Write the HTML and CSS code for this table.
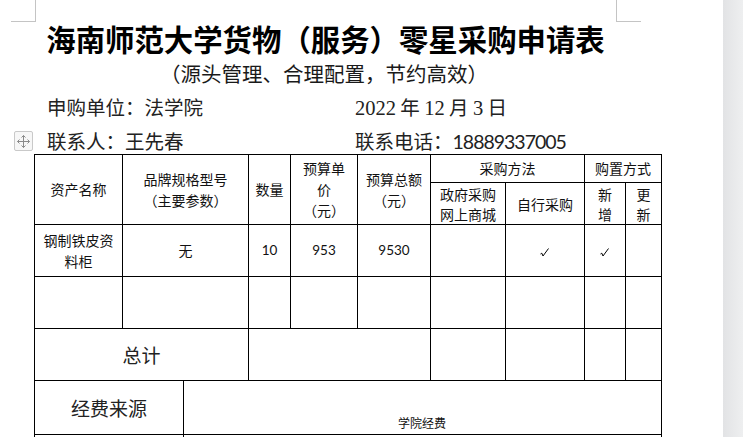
FILE: index.html
```html
<!DOCTYPE html>
<html lang="zh-CN">
<head>
<meta charset="utf-8">
<title>海南师范大学货物（服务）零星采购申请表</title>
<link rel="stylesheet" href="styles.css">
</head>
<body>
<div class="window">
  <div class="page">
    <span class="crop crop-tl"></span>
    <span class="crop crop-tr"></span>
    <span class="move-handle">
      <svg width="13" height="13" viewBox="0 0 13 13" fill="none" stroke="#8a8a8a" stroke-width="1">
        <path d="M6.5 0.5 V12.5 M0.5 6.5 H12.5"/>
        <path d="M4.5 2.5 L6.5 0.5 L8.5 2.5 M4.5 10.5 L6.5 12.5 L8.5 10.5 M2.5 4.5 L0.5 6.5 L2.5 8.5 M10.5 4.5 L12.5 6.5 L10.5 8.5"/>
      </svg>
    </span>
    <div class="doc">
      <h1 class="title">海南师范大学货物（服务）零星采购申请表</h1>
      <p class="subtitle">（源头管理、合理配置，节约高效）</p>
      <div class="info-row">
        <span>申购单位：法学院</span>
        <span><span class="num">2022</span> 年 <span class="num">12</span> 月 <span class="num">3</span> 日</span>
      </div>
      <div class="info-row info-row-2">
        <span>联系人：王先春</span>
        <span>联系电话：<span class="phone">18889337005</span></span>
      </div>
      <table class="form">
        <colgroup>
          <col class="c1"><col class="c2a"><col class="c2b"><col class="c3"><col class="c4"><col class="c5"><col class="c6"><col class="c7"><col class="c8"><col class="c9">
        </colgroup>
        <tr class="r-h1">
          <td rowspan="2">资产名称</td>
          <td rowspan="2" colspan="2">品牌规格型号<br>（主要参数）</td>
          <td rowspan="2">数量</td>
          <td rowspan="2">预算单<br>价<br>（元）</td>
          <td rowspan="2">预算总额<br>（元）</td>
          <td colspan="2">采购方法</td>
          <td colspan="2">购置方式</td>
        </tr>
        <tr class="r-h2">
          <td>政府采购<br>网上商城</td>
          <td>自行采购</td>
          <td>新<br>增</td>
          <td>更<br>新</td>
        </tr>
        <tr class="r-data">
          <td>钢制铁皮资<br>料柜</td>
          <td colspan="2">无</td>
          <td class="n">10</td>
          <td class="n">953</td>
          <td class="n">9530</td>
          <td></td>
          <td><svg class="tick" width="10" height="9" viewBox="0 0 10 9" fill="none" stroke="#000" stroke-width="1"><path d="M0.5 6 L1.8 5.2 L3 8 L8.5 0.5"/></svg></td>
          <td><svg class="tick" width="10" height="9" viewBox="0 0 10 9" fill="none" stroke="#000" stroke-width="1"><path d="M0.5 6 L1.8 5.2 L3 8 L8.5 0.5"/></svg></td>
          <td></td>
        </tr>
        <tr class="r-data">
          <td></td><td colspan="2"></td><td></td><td></td><td></td><td></td><td></td><td></td><td></td>
        </tr>
        <tr class="r-data">
          <td colspan="3" class="big">总计</td>
          <td colspan="3"></td><td></td><td></td><td></td><td></td>
        </tr>
        <tr class="r-fund">
          <td colspan="2" class="big">经费来源</td>
          <td colspan="8" class="fund-src">学院经费</td>
        </tr>
        <tr class="r-next">
          <td colspan="2"></td>
          <td colspan="8"></td>
        </tr>
      </table>
    </div>
  </div>
  <div class="scrollbar"></div>
</div>
</body>
</html>
```

FILE: styles.css
```css
html, body {
  margin: 0;
  padding: 0;
  background: #ffffff;
}

.window {
  display: flex;
  width: 743px;
  height: 437px;
  overflow: hidden;
}

.page {
  position: relative;
  width: 723px;
  height: 437px;
  overflow: hidden;
  background: #ffffff;
}

.scrollbar {
  width: 20px;
  height: 437px;
  background: linear-gradient(to right, #e2e3e5, #eeeff0);
}

.crop {
  position: absolute;
  top: 0;
  height: 21px;
  border-bottom: 1px solid #c4c4c4;
}

.crop-tl {
  left: 11px;
  width: 24px;
  border-right: 1px solid #c4c4c4;
}

.crop-tr {
  left: 616px;
  width: 24px;
  border-left: 1px solid #c4c4c4;
}

.move-handle {
  position: absolute;
  left: 14px;
  top: 131px;
  width: 17px;
  height: 18px;
  border: 1px solid #c9c9c9;
  border-radius: 2px;
  background: #f7f7f7;
  display: flex;
  align-items: center;
  justify-content: center;
}

.doc {
  margin-left: 35px;
  width: 581px;
  padding-top: 20px;
  font-family: "Noto Sans CJK SC", "Noto Sans", sans-serif;
  color: #111;
}

.title {
  margin: 0;
  font-size: 29.4px;
  line-height: 37px;
  font-weight: 700;
  text-align: center;
  color: #000;
  white-space: nowrap;
}

.subtitle {
  margin: 0;
  padding-left: 125px;
  font-size: 20.5px;
  line-height: 33px;
  font-weight: 400;
  color: #1a1a1a;
  white-space: nowrap;
}

.info-row {
  display: grid;
  grid-template-columns: 308px 1fr;
  padding-left: 12px;
  font-size: 19.5px;
  line-height: 34px;
  color: #222;
  white-space: nowrap;
}

.info-row-2 {
  line-height: 30px;
  padding-top: 1px;
  height: 28px;
  overflow: visible;
}

.num {
  font-family: "Liberation Serif", serif;
  font-size: 20.5px;
}

.phone {
  font-family: "Lato", "Liberation Sans", sans-serif;
  font-size: 19.5px;
  letter-spacing: -1px;
}

.form {
  margin-left: -1px;
  border-collapse: collapse;
  table-layout: fixed;
  width: 628px;
  font-size: 14px;
  line-height: 21px;
  color: #111;
}

.form td {
  border: 1px solid #000;
  padding: 0;
  text-align: center;
  vertical-align: middle;
}

.c1 { width: 88px; }
.c2a { width: 61px; }
.c2b { width: 65px; }
.c3 { width: 42px; }
.c4 { width: 67px; }
.c5 { width: 73px; }
.c6 { width: 75px; }
.c7 { width: 79px; }
.c8 { width: 41px; }
.c9 { width: 36px; }

.r-h1 { height: 28px; }
.r-h2 { height: 42px; }
.r-h2 td { line-height: 20px; }
.r-data { height: 52px; }
.r-fund { height: 54px; }
.r-next { height: 50px; }

.form td.n {
  font-family: "Lato", "Liberation Sans", sans-serif;
  font-size: 13.5px;
}

.tick {
  display: inline-block;
  vertical-align: middle;
}

.form td.big {
  font-size: 19px;
  line-height: 26px;
  color: #222;
}

.form td.fund-src {
  vertical-align: bottom;
  font-size: 12px;
  line-height: 16px;
  padding-bottom: 3px;
  padding-right: 1px;
}
```
